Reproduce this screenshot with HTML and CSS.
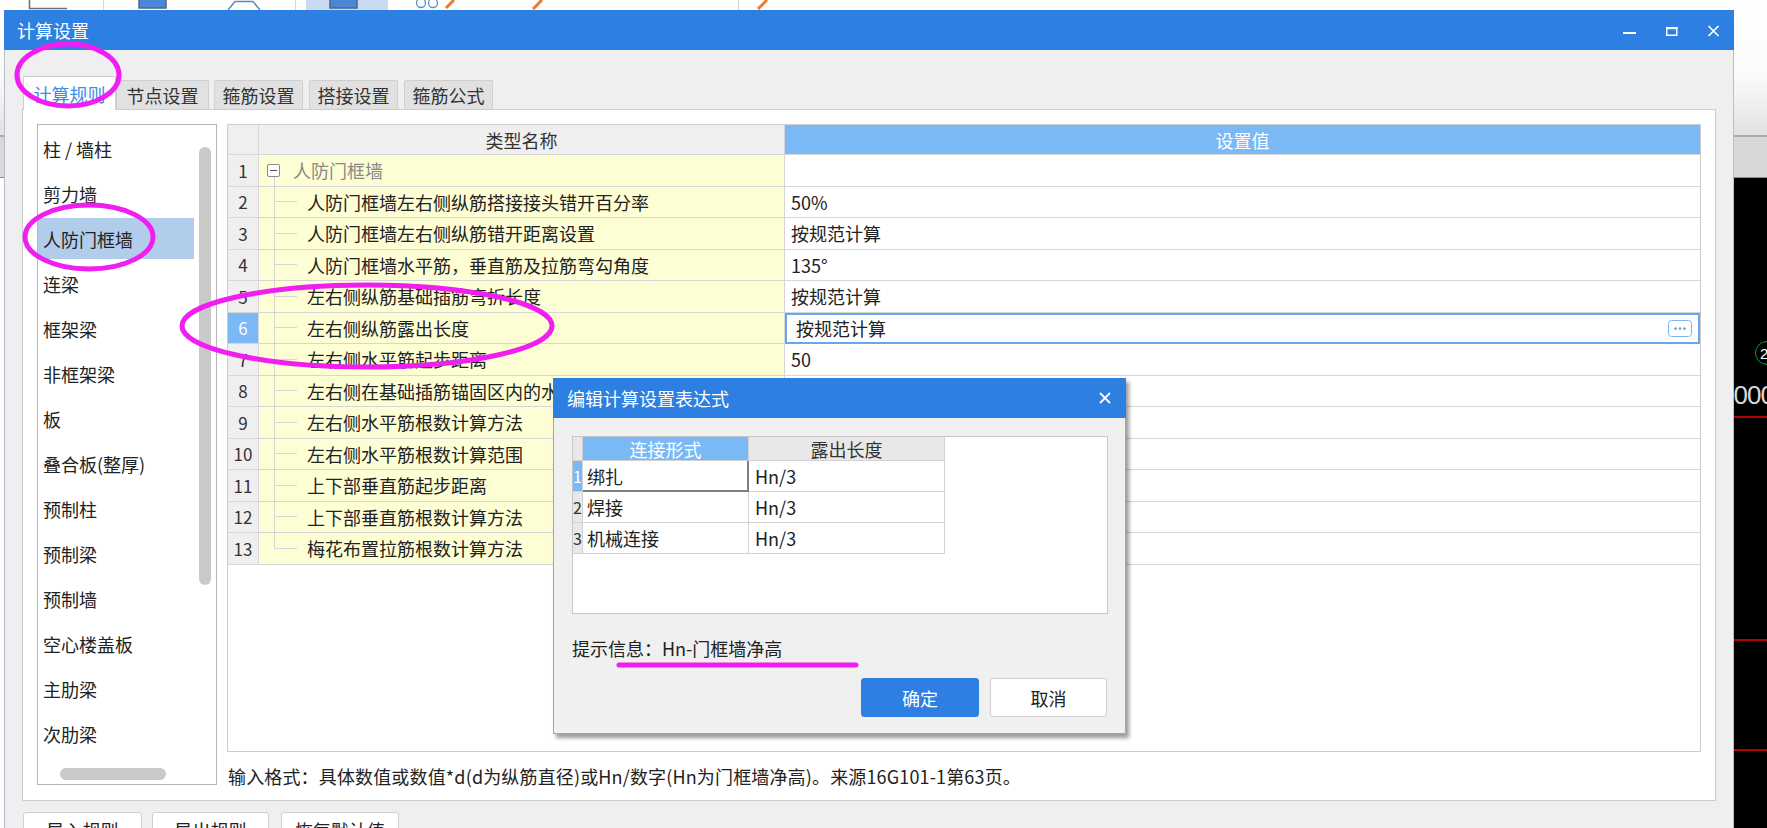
FILE: index.html
```html
<!DOCTYPE html>
<html lang="zh-CN">
<head>
<meta charset="utf-8">
<title>计算设置</title>
<link rel="stylesheet" href="styles.css">
</head>
<body>
<div class="app">
  <header class="toolbar">
    <svg class="tb-strip" width="800" height="10" viewBox="0 0 800 10">
      <path d="M29.5 0 V8.5 H45 M45 8.5 H67" fill="none" stroke="#707070" stroke-width="1.5"/>
      <line x1="103.5" y1="0" x2="103.5" y2="10" stroke="#d6d6d6"/>
      <rect x="139" y="-6" width="27" height="14" fill="#4c86d8" stroke="#4d6682" stroke-width="1.5"/>
      <path d="M228 10 L235 1.5 H253 L260 10" fill="none" stroke="#5d86bd" stroke-width="1.5"/>
      <line x1="295.5" y1="0" x2="295.5" y2="10" stroke="#d6d6d6"/>
      <rect x="306" y="0" width="82" height="10" fill="#c9dbf2"/>
      <rect x="330" y="-6" width="27" height="14" fill="#4c86d8" stroke="#4d6682" stroke-width="1.5"/>
      <circle cx="421" cy="3" r="4.5" fill="none" stroke="#5b8fd0" stroke-width="1.3"/>
      <circle cx="433" cy="3" r="4.5" fill="none" stroke="#5b8fd0" stroke-width="1.3"/>
      <path d="M446 8 L454 0" stroke="#ec7a26" stroke-width="3"/>
      <path d="M533 9 L542 0" stroke="#ec7a26" stroke-width="3"/>
      <line x1="738.5" y1="0" x2="738.5" y2="10" stroke="#d6d6d6"/>
      <path d="M758 9 L767 0" stroke="#ec7a26" stroke-width="3"/>
    </svg>
  </header>
  <div class="ribbon"></div>
  <div class="work">
    <div class="side"></div>
    <div class="canvas">
      <div class="cad-circle"><span>2</span></div>
      <div class="cad-text">1000</div>
      <div class="cad-line l1"></div>
      <div class="cad-line l2"></div>
      <div class="cad-line l3"></div>
    </div>
  </div>

  <section class="win main-win">
    <div class="titlebar">
      <span class="title">计算设置</span>
      <div class="controls">
        <svg width="13" height="14" viewBox="0 0 13 14"><rect x="0" y="9" width="13" height="2" fill="#fff"/></svg>
        <svg width="13" height="14" viewBox="0 0 13 14"><rect x="1.75" y="4.75" width="10" height="7.5" fill="none" stroke="#fff" stroke-width="1.5"/><rect x="1" y="4" width="11.5" height="2.2" fill="#fff"/></svg>
        <svg width="13" height="14" viewBox="0 0 13 14"><path d="M1.5 3 L11.5 13 M11.5 3 L1.5 13" stroke="#fff" stroke-width="1.7"/></svg>
      </div>
    </div>
    <div class="win-body">
      <div class="tabs">
        <div class="tab active">计算规则</div>
        <div class="tab t2">节点设置</div>
        <div class="tab">箍筋设置</div>
        <div class="tab">搭接设置</div>
        <div class="tab">箍筋公式</div>
      </div>
      <div class="panel">
        <div class="listbox">
          <ul class="list">
            <li>柱 / 墙柱</li>
            <li>剪力墙</li>
            <li class="sel">人防门框墙</li>
            <li>连梁</li>
            <li>框架梁</li>
            <li>非框架梁</li>
            <li>板</li>
            <li>叠合板(整厚)</li>
            <li>预制柱</li>
            <li>预制梁</li>
            <li>预制墙</li>
            <li>空心楼盖板</li>
            <li>主肋梁</li>
            <li>次肋梁</li>
          </ul>
          <div class="vthumb"></div>
          <div class="hthumb"></div>
        </div>
        <div class="rightcol">
          <div class="gridbox">
            <div class="grid">
              <div class="h n0"></div><div class="h nm0">类型名称</div><div class="h v">设置值</div>

              <div class="n">1</div><div class="nm root"><span class="minus"></span><span class="grey">人防门框墙</span></div><div class="v"></div>
              <div class="n">2</div><div class="nm t">人防门框墙左右侧纵筋搭接接头错开百分率</div><div class="v">50%</div>
              <div class="n">3</div><div class="nm t">人防门框墙左右侧纵筋错开距离设置</div><div class="v">按规范计算</div>
              <div class="n">4</div><div class="nm t">人防门框墙水平筋，垂直筋及拉筋弯勾角度</div><div class="v">135°</div>
              <div class="n">5</div><div class="nm t">左右侧纵筋基础插筋弯折长度</div><div class="v">按规范计算</div>
              <div class="n sel">6</div><div class="nm t">左右侧纵筋露出长度</div><div class="v edit"><span>按规范计算</span><svg class="dots" width="24" height="17" viewBox="0 0 24 17"><rect x="0.5" y="0.5" width="23" height="16" rx="3" fill="#fff" stroke="#80b3ea"/><circle cx="7.5" cy="8.5" r="1.3" fill="#5f9be0"/><circle cx="12" cy="8.5" r="1.3" fill="#5f9be0"/><circle cx="16.5" cy="8.5" r="1.3" fill="#5f9be0"/></svg></div>
              <div class="n">7</div><div class="nm t">左右侧水平筋起步距离</div><div class="v">50</div>
              <div class="n">8</div><div class="nm t">左右侧在基础插筋锚固区内的水平筋根数</div><div class="v"></div>
              <div class="n">9</div><div class="nm t">左右侧水平筋根数计算方法</div><div class="v"></div>
              <div class="n">10</div><div class="nm t">左右侧水平筋根数计算范围</div><div class="v"></div>
              <div class="n">11</div><div class="nm t">上下部垂直筋起步距离</div><div class="v"></div>
              <div class="n">12</div><div class="nm t">上下部垂直筋根数计算方法</div><div class="v"></div>
              <div class="n">13</div><div class="nm t last">梅花布置拉筋根数计算方法</div><div class="v"></div>
            </div>
          </div>
          <p class="hint">输入格式：具体数值或数值*d(d为纵筋直径)或Hn/数字(Hn为门框墙净高)。来源16G101-1第63页。</p>
        </div>
      </div>
      <div class="footer">
        <button class="btn b1">导入规则</button>
        <button class="btn b2">导出规则</button>
        <button class="btn b3">恢复默认值</button>
      </div>
    </div>
  </section>

  <section class="win sub-win">
    <div class="sub-title">
      <span class="title">编辑计算设置表达式</span>
      <svg width="12" height="12" viewBox="0 0 12 12"><path d="M1 1 L11 11 M11 1 L1 11" stroke="#fff" stroke-width="1.8"/></svg>
    </div>
    <div class="sub-body">
      <div class="sbox">
        <div class="sgrid">
          <div class="sh"></div><div class="sh blue">连接形式</div><div class="sh">露出长度</div>
          <div class="sn sel">1</div><div class="sc focus">绑扎</div><div class="sc c2">Hn/3</div>
          <div class="sn">2</div><div class="sc">焊接</div><div class="sc c2">Hn/3</div>
          <div class="sn">3</div><div class="sc">机械连接</div><div class="sc c2">Hn/3</div>
        </div>
      </div>
      <p class="prompt">提示信息：Hn-门框墙净高</p>
      <div class="sbtns">
        <button class="sbtn ok">确定</button>
        <button class="sbtn">取消</button>
      </div>
    </div>
  </section>

  <svg class="marks" width="1767" height="828" viewBox="0 0 1767 828">
    <g fill="none" stroke="#f01ef0" stroke-width="5">
      <ellipse cx="68" cy="75" rx="51" ry="31"/>
      <ellipse cx="89" cy="237" rx="64" ry="32"/>
      <ellipse cx="367" cy="326" rx="185" ry="41"/>
      <path d="M619 665 H856" stroke-linecap="round"/>
    </g>
  </svg>
</div>
</body>
</html>
```

FILE: styles.css
```css
* { box-sizing: border-box; margin: 0; padding: 0; }
html, body { width: 1767px; height: 828px; overflow: hidden; background: #fff; }
body { font-family: "Noto Sans CJK SC", "Noto Sans", sans-serif; font-size: 18px; color: #222; }
ul { list-style: none; }
button { font: inherit; color: inherit; cursor: default; }

.app { position: relative; width: 1767px; height: 828px; overflow: hidden; display: flex; flex-direction: column; }

/* backdrop application */
.toolbar { flex: none; height: 137px; background: linear-gradient(#ffffff 0%, #fbfbfb 55%, #e2e2e2 100%); border-bottom: 2px solid #ababab; }
.tb-strip { display: block; }
.ribbon { flex: none; height: 41px; background: #d8d8d8; border-bottom: 1px solid #8e8e8e; }
.work { flex: 1; display: flex; min-height: 0; }
.side { width: 300px; background: #fff; }
.canvas { flex: 1; position: relative; background: #000; overflow: hidden; }
.cad-circle { position: absolute; left: 1455px; top: 163px; width: 24px; height: 24px; border: 1.5px solid #1b9b2c; border-radius: 50%; color: #fff; font: 15px "Liberation Sans", sans-serif; display: flex; align-items: center; padding-left: 4px; }
.cad-text { position: absolute; left: 1420px; top: 204px; font: 26px/1 "Liberation Sans", sans-serif; color: #d8d8d8; letter-spacing: -1px; }
.cad-line { position: absolute; left: 1300px; width: 200px; height: 2px; background: #b40000; }
.l1 { top: 238px; }
.l2 { top: 461px; }
.l3 { top: 571px; }

/* windows */
.win { position: absolute; background: #efefef; }
.main-win { left: 4px; top: 10px; width: 1730px; height: 840px; border: 1px solid #b3bfcc; border-top: 0; display: flex; flex-direction: column; }
.titlebar { flex: none; height: 40px; margin: 0 -1px; background: #2d7fe1; color: #fff; display: flex; align-items: center; justify-content: space-between; padding: 0 14px 0 13px; }
.title { font-size: 18px; line-height: 1; }
.controls { display: flex; align-items: center; gap: 29px; }
.controls svg { display: block; }

.win-body { flex: 1; padding: 0 17px; }
.tabs { height: 59px; display: flex; align-items: flex-end; padding-left: 1px; }
.tab { height: 29px; width: 89px; margin-right: 6px; background: #e1e1e1; border: 1px solid #d0d0d0; border-bottom: 0; border-radius: 2px 2px 0 0; display: flex; align-items: center; justify-content: center; font-size: 18px; color: #333; }
.tab.active { height: 34px; width: 93px; margin-right: 0; margin-bottom: -1px; background: #fff; color: #3a8de6; border-color: #cdcdcd; position: relative; z-index: 1; }
.tab.t2 { width: 93px; margin-right: 5px; }

.panel { height: 692px; background: #fff; border: 1px solid #cdcdcd; display: flex; padding: 14px 14px 15px 14px; }
.listbox { position: relative; flex: none; width: 180px; border: 1px solid #b5b5b5; overflow: hidden; }
.list { padding-top: 3px; }
.list li { height: 41px; margin-bottom: 4px; width: 156px; padding-left: 5px; display: flex; align-items: center; font-size: 18px; color: #222; white-space: nowrap; }
.list li.sel { background: #b2cdec; }
.vthumb { position: absolute; left: 161px; top: 22px; width: 12px; height: 438px; border-radius: 6px; background: #c9c9c9; }
.hthumb { position: absolute; left: 22px; top: 643px; width: 106px; height: 12px; border-radius: 6px; background: #c9c9c9; }

.rightcol { flex: 1; margin-left: 10px; display: flex; flex-direction: column; min-width: 0; }
.gridbox { height: 628px; flex: none; border: 1px solid #cdcdcd; background: #fff; }
.grid { display: grid; grid-template-columns: 31px 526px 1fr; grid-template-rows: 30px repeat(13, 31.5px); }
.grid > div { border-right: 1px solid #d6d6d6; border-bottom: 1px solid #d6d6d6; display: flex; align-items: center; overflow: hidden; white-space: nowrap; font-size: 18px; }
.grid > .v { border-right: 0; padding-left: 6px; background: #fff; }
.grid > .h { background: #efefef; justify-content: center; color: #333; padding-left: 0; }
.grid > .h.v { background: #7bb8f6; color: #fff; }
.grid > .n { background: #efefef; justify-content: center; font-size: 17px; color: #333; }
.grid > .n.sel { background: #7ab8f6; color: #fff; }
.nm { background: #fefed4; color: #222; }
.nm.t { padding-left: 48px; background: linear-gradient(#d6d6d6, #d6d6d6) 15px 0 / 1px 100% no-repeat, linear-gradient(#d6d6d6, #d6d6d6) 15px 50% / 23px 1px no-repeat, #fefed4; }
.nm.t.last { background: linear-gradient(#d6d6d6, #d6d6d6) 15px 0 / 1px 50% no-repeat, linear-gradient(#d6d6d6, #d6d6d6) 15px 50% / 23px 1px no-repeat, #fefed4; }
.nm.root { padding-left: 8px; background: linear-gradient(#d6d6d6, #d6d6d6) 15px 100% / 1px 9px no-repeat, #fefed4; }
.minus { position: relative; width: 13px; height: 13px; border: 1px solid #8a8a8a; border-radius: 2px; background: #fff; margin-right: 13px; flex: none; }
.minus::after { content: ""; position: absolute; left: 2px; right: 2px; top: 5px; height: 1px; background: #555; }
.grey { color: #8a8a8a; }
.grid > .v.edit { border: 2px solid #69a7ec; padding-left: 9px; padding-right: 6px; justify-content: space-between; }
.dots { display: block; }

.hint { margin-top: 12px; line-height: 24px; font-size: 18px; color: #222; padding-left: 1px; white-space: nowrap; letter-spacing: 0.15px; }

.footer { display: flex; margin-top: 11px; padding-left: 1px; }
.btn { height: 36px; background: #fff; border: 1px solid #cfcfcf; border-radius: 3px; font-size: 18px; color: #222; display: flex; justify-content: center; align-items: center; }
.b1 { width: 119px; margin-right: 10px; }
.b2 { width: 117px; margin-right: 12px; }
.b3 { width: 118px; }

/* sub dialog */
.sub-win { left: 553px; top: 378px; width: 573px; height: 356px; border: 1px solid #98a9bd; border-top: 0; box-shadow: 3px 4px 4px rgba(0, 0, 0, 0.4); background: #f0f0f0; display: flex; flex-direction: column; z-index: 5; }
.sub-title { flex: none; height: 40px; margin: 0 -1px; background: #2d7fe1; color: #fff; display: flex; align-items: center; justify-content: space-between; padding: 0 15px 0 14px; }
.sub-title svg { display: block; }
.sub-body { padding: 18px 17px 0 18px; }
.sbox { height: 178px; background: #fff; border: 1px solid #c6c6c6; }
.sgrid { display: grid; grid-template-columns: 10px 166px 196px; grid-template-rows: 24px repeat(3, 31px); width: 372px; }
.sgrid > div { border-right: 1px solid #d2d2d2; border-bottom: 1px solid #d2d2d2; display: flex; align-items: center; white-space: nowrap; font-size: 18px; }
.sgrid > .sh { background: #e8e8e8; justify-content: center; color: #333; }
.sgrid > .sh.blue { background: #7ab8f6; color: #fff; }
.sgrid > .sn { background: #e8e8e8; font-size: 16px; color: #333; overflow: visible; }
.sgrid > .sn.sel { background: #7ab8f6; color: #fff; }
.sgrid > .sc { padding-left: 4px; background: #fff; }
.sgrid > .sc.c2 { padding-left: 6px; }
.sgrid > .sc.focus { border-right: 2px solid #808080; border-bottom: 2px solid #808080; }
.prompt { margin-top: 21px; line-height: 26px; font-size: 18px; }
.sbtns { display: flex; justify-content: flex-end; gap: 11px; margin-top: 17px; padding-right: 1px; }
.sbtn { width: 117px; height: 39px; border-radius: 3px; border: 1px solid #cfcfcf; background: #fff; font-size: 18px; color: #222; }
.sbtn.ok { width: 118px; background: #2d80e1; border-color: #2d80e1; color: #fff; }

.marks { position: absolute; left: 0; top: 0; pointer-events: none; z-index: 10; }
```
